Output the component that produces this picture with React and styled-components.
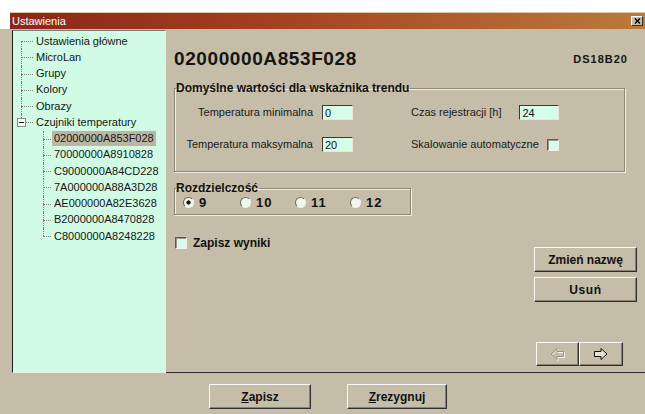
import React from "react";
import styled, { createGlobalStyle } from "styled-components";

const BEIGE = "#c5bda7";
const MINT = "#d1fbe4";
const FIELD = "#d6fcea";
const FONT = `"Liberation Sans", Arial, sans-serif`;

const Global = createGlobalStyle`
  html, body { margin: 0; padding: 0; background: #fff; }
  body { font-family: ${FONT}; }
  *, *::before, *::after { box-sizing: border-box; }
`;

const Screen = styled.div`
  width: 645px;
  height: 414px;
  padding-top: 12px;
  display: flex;
  flex-direction: column;
  overflow: hidden;
`;

const TitleBar = styled.div`
  height: 17px;
  margin-left: 10px;
  padding: 0 2px;
  border-top: 1px solid #dcc8a6;
  display: flex;
  align-items: center;
  justify-content: space-between;
  background: linear-gradient(90deg, #8a2618 0%, #a3401f 40%, #bb7a3c 100%);
  color: #fff;
  font-size: 11px;
  line-height: 16px;
`;

const CloseBox = styled.span`
  width: 12px;
  height: 10px;
  display: flex;
  align-items: center;
  justify-content: center;
  background: ${BEIGE};
  border: 1px solid;
  border-color: #fff #303030 #303030 #fff;
`;

const Window = styled.div`
  flex: 1;
  display: flex;
  flex-direction: column;
  background: ${BEIGE};
`;

const Body = styled.div`
  height: 344px;
  display: flex;
  padding: 1px 0 0 12px;
`;

const TreePanel = styled.div`
  width: 154px;
  background: ${MINT};
  border: 1px solid;
  border-color: #7a7a70 #ecebe2 #ecebe2 #1e1e1e;
  padding-top: 2px;
`;

const TreeRow = styled.div`
  position: relative;
  height: 16.25px;
  display: flex;
  align-items: center;
  padding-left: ${(p) => (p.$child ? 39 : 21)}px;
  font-size: 11px;
  color: #161616;
  white-space: nowrap;

  &::before {
    content: "";
    position: absolute;
    left: ${(p) => (p.$child ? 30 : 8)}px;
    top: ${(p) => (p.$first ? "50%" : "0")};
    bottom: ${(p) => (p.$last ? "50%" : "0")};
    border-left: 1px dotted #7c7c7c;
  }

  &::after {
    content: "";
    position: absolute;
    left: ${(p) => (p.$child ? 30 : 8)}px;
    width: ${(p) => (p.$child ? 8 : 12)}px;
    top: 50%;
    border-top: 1px dotted #7c7c7c;
  }
`;

const Expander = styled.span`
  position: absolute;
  z-index: 1;
  left: 4px;
  top: calc(50% - 4px);
  width: 9px;
  height: 9px;
  background: #eefff6;
  border: 1px solid #8a8a84;

  &::after {
    content: "";
    position: absolute;
    left: 1px;
    top: 3px;
    width: 5px;
    height: 1px;
    background: #111;
  }
`;

const NodeLabel = styled.span`
  padding: 1px 2px;
  line-height: 13px;
  background: ${(p) => (p.$selected ? "#bdb5a3" : "transparent")};
`;

const Main = styled.div`
  flex: 1;
  display: flex;
  flex-direction: column;
  padding: 18px 8px 6px 8px;
  border-bottom: 1px solid #2d2d2d;
`;

const Header = styled.div`
  display: flex;
  justify-content: space-between;
  align-items: center;
  margin-right: 9px;
`;

const DeviceId = styled.h1`
  margin: 0;
  font: bold 19px/22px ${FONT};
  letter-spacing: 0.6px;
  color: #151515;
`;

const Model = styled.span`
  font: bold 11px/13px ${FONT};
  letter-spacing: 1px;
  color: #151515;
`;

const GroupBox = styled.fieldset`
  margin: ${(p) => p.$mt}px ${(p) => p.$mr || 0}px 0 0;
  padding: 0;
  min-width: 0;
  width: ${(p) => (p.$w ? `${p.$w}px` : "auto")};
  border: 1px solid #8d8776;
  box-shadow: inset 1px 1px 0 #f3efe4, 1px 1px 0 #f3efe4;
`;

const Legend = styled.legend`
  margin-left: 1px;
  padding: 0 1px 0 0;
  font: bold 12px/12px ${FONT};
  color: #111;
`;

const FieldGrid = styled.div`
  display: grid;
  grid-template-columns: 138px 31px auto;
  column-gap: 9px;
  row-gap: 17px;
  align-items: center;
  padding: 11px 0 19px 0;
`;

const Label = styled.span`
  font: 11px/13px ${FONT};
  color: #1a1a1a;
  white-space: nowrap;
  text-align: ${(p) => p.$align || "left"};
`;

const InlineField = styled.div`
  display: flex;
  align-items: center;
  gap: ${(p) => p.$gap}px;
  padding-left: 49px;
`;

const TextBox = styled.input`
  width: ${(p) => p.$w}px;
  height: 15px;
  padding: 0 2px;
  background: ${FIELD};
  border: 1px solid;
  border-color: #3a3a3a #e6e6dc #e6e6dc #3a3a3a;
  font: 11px ${FONT};
  color: #111;
  outline: none;
`;

const CheckBox = styled.input.attrs({ type: "checkbox" })`
  appearance: none;
  margin: 0;
  width: 12px;
  height: 12px;
  background: ${FIELD};
  border: 1px solid;
  border-color: #5a5a52 #f2f0e8 #f2f0e8 #5a5a52;
  box-shadow: inset 1px 1px 0 #9a968a;
`;

const Lower = styled.div`
  flex: 1;
  display: flex;
  justify-content: space-between;
  margin-top: 10px;
`;

const LeftCol = styled.div`
  display: flex;
  flex-direction: column;
`;

const RadioRow = styled.div`
  display: grid;
  grid-template-columns: 57px 55px 55px auto;
  padding: 2px 0 5px 8px;
`;

const RadioItem = styled.label`
  display: flex;
  align-items: center;
  gap: 5px;
  font: bold 13px/13px ${FONT};
  letter-spacing: 1px;
  color: #111;
`;

const Radio = styled.input.attrs({ type: "radio" })`
  appearance: none;
  margin: 0;
  width: 11px;
  height: 11px;
  border-radius: 50%;
  border: 1px solid;
  border-color: #6a6a62 #f4f2ea #f4f2ea #6a6a62;
  background: #eef8ee;

  &:checked {
    background: radial-gradient(circle, #111 0 1.8px, #eef8ee 2.4px);
  }
`;

const CheckRow = styled.label`
  display: flex;
  align-items: center;
  gap: 6px;
  margin: 21px 0 0 1px;
  font: bold 12px/14px ${FONT};
  color: #111;
`;

const RightCol = styled.div`
  display: flex;
  flex-direction: column;
  align-items: flex-end;
  gap: 5px;
  padding-top: 65px;
`;

const Button = styled.button`
  width: ${(p) => p.$w}px;
  height: ${(p) => p.$h || 25}px;
  padding: 0;
  display: flex;
  align-items: center;
  justify-content: center;
  background: ${BEIGE};
  border: 1px solid;
  border-color: #fbfaf4 #2e2e2e #2e2e2e #fbfaf4;
  box-shadow: inset -1px -1px 0 #878271;
  font: bold 12px ${FONT};
  letter-spacing: ${(p) => p.$track || 0}px;
  color: #111;
`;

const ArrowGroup = styled.div`
  display: flex;
  margin: auto 14px 0 0;
`;

const Footer = styled.div`
  flex: 1;
  display: flex;
  justify-content: center;
  gap: 36px;
  padding: 11px 0 0 11px;
`;

const ROOT = ["Ustawienia główne", "MicroLan", "Grupy", "Kolory", "Obrazy", "Czujniki temperatury"];
const SENSORS = [
  "02000000A853F028",
  "70000000A8910828",
  "C9000000A84CD228",
  "7A000000A88A3D28",
  "AE000000A82E3628",
  "B2000000A8470828",
  "C8000000A8248228",
];

const ArrowIcon = ({ dir, disabled }) => {
  const right = "0.5,3.5 7,3.5 7,0.5 13,6 7,11.5 7,8.5 0.5,8.5";
  const left = "13.5,3.5 7,3.5 7,0.5 1,6 7,11.5 7,8.5 13.5,8.5";
  const pts = dir === "left" ? left : right;
  return (
    <svg width="15" height="13" viewBox="0 0 15 13">
      {disabled && (
        <polygon points={pts} transform="translate(1 1)" fill="none" stroke="#f6f4ec" strokeWidth="1" />
      )}
      <polygon
        points={pts}
        fill={disabled ? "none" : "#e4e0d4"}
        stroke={disabled ? "#9a9486" : "#111"}
        strokeWidth="1"
      />
    </svg>
  );
};

export default function App() {
  return (
    <>
      <Global />
      <Screen>
        <TitleBar>
          <span>Ustawienia</span>
          <CloseBox>
            <svg width="7" height="6" viewBox="0 0 7 6">
              <path d="M1 0.5 L6 5.5 M6 0.5 L1 5.5" stroke="#000" strokeWidth="1.4" />
            </svg>
          </CloseBox>
        </TitleBar>
        <Window>
          <Body>
            <TreePanel>
              {ROOT.map((name, i) => (
                <TreeRow key={name} $first={i === 0} $last={i === ROOT.length - 1}>
                  {i === ROOT.length - 1 && <Expander />}
                  <NodeLabel>{name}</NodeLabel>
                </TreeRow>
              ))}
              {SENSORS.map((id, i) => (
                <TreeRow key={id} $child $last={i === SENSORS.length - 1}>
                  <NodeLabel $selected={i === 0}>{id}</NodeLabel>
                </TreeRow>
              ))}
            </TreePanel>
            <Main>
              <Header>
                <DeviceId>02000000A853F028</DeviceId>
                <Model>DS18B20</Model>
              </Header>
              <GroupBox $mt={12} $mr={12}>
                <Legend>Domyślne wartości dla wskaźnika trendu</Legend>
                <FieldGrid>
                  <Label $align="right">Temperatura minimalna</Label>
                  <TextBox $w={31} defaultValue="0" />
                  <InlineField $gap={18}>
                    <Label>Czas rejestracji [h]</Label>
                    <TextBox $w={40} defaultValue="24" />
                  </InlineField>
                  <Label $align="right">Temperatura maksymalna</Label>
                  <TextBox $w={31} defaultValue="20" />
                  <InlineField $gap={8}>
                    <Label>Skalowanie automatyczne</Label>
                    <CheckBox />
                  </InlineField>
                </FieldGrid>
              </GroupBox>
              <Lower>
                <LeftCol>
                  <GroupBox $mt={0} $w={237}>
                    <Legend>Rozdzielczość</Legend>
                    <RadioRow>
                      {["9", "10", "11", "12"].map((v) => (
                        <RadioItem key={v}>
                          <Radio name="resolution" defaultChecked={v === "9"} />
                          {v}
                        </RadioItem>
                      ))}
                    </RadioRow>
                  </GroupBox>
                  <CheckRow>
                    <CheckBox />
                    Zapisz wyniki
                  </CheckRow>
                </LeftCol>
                <RightCol>
                  <Button $w={103}>Zmień nazwę</Button>
                  <Button $w={103} $track={0.6}>Usuń</Button>
                  <ArrowGroup>
                    <Button $w={43} $h={24} disabled>
                      <ArrowIcon dir="left" disabled />
                    </Button>
                    <Button $w={44} $h={24}>
                      <ArrowIcon dir="right" />
                    </Button>
                  </ArrowGroup>
                </RightCol>
              </Lower>
            </Main>
          </Body>
          <Footer>
            <Button $w={102}>
              <span>
                <u>Z</u>apisz
              </span>
            </Button>
            <Button $w={100}>
              <span>
                <u>Z</u>rezygnuj
              </span>
            </Button>
          </Footer>
        </Window>
      </Screen>
    </>
  );
}
